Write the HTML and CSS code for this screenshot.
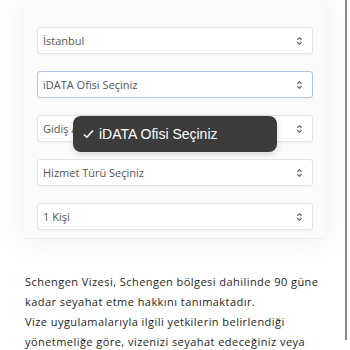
FILE: index.html
```html
<!DOCTYPE html>
<html lang="tr">
<head>
  <meta charset="UTF-8">
  <meta name="viewport" content="width=device-width, initial-scale=1">
  <title>Randevu</title>
  <link rel="stylesheet" href="styles.css">
</head>
<body>
  <div class="page">
    <div class="main">
      <div class="panel">
        <div class="field">
          <span>İstanbul</span>
          <svg class="arrows" viewBox="0 0 8 12" width="7" height="10"><path d="M1.5 4.5 L4 2 L6.5 4.5 M1.5 7.5 L4 10 L6.5 7.5" fill="none" stroke="#555" stroke-width="1.3"/></svg>
        </div>
        <div class="field focused">
          <span>iDATA Ofisi Seçiniz</span>
          <svg class="arrows" viewBox="0 0 8 12" width="7" height="10"><path d="M1.5 4.5 L4 2 L6.5 4.5 M1.5 7.5 L4 10 L6.5 7.5" fill="none" stroke="#555" stroke-width="1.3"/></svg>
        </div>
        <div class="field">
          <span>Gidiş Amacı Seçiniz</span>
          <svg class="arrows" viewBox="0 0 8 12" width="7" height="10"><path d="M1.5 4.5 L4 2 L6.5 4.5 M1.5 7.5 L4 10 L6.5 7.5" fill="none" stroke="#555" stroke-width="1.3"/></svg>
          <div class="popup">
            <svg class="check" viewBox="0 0 12 10" width="11" height="10"><path d="M1 5.5 L4.2 8.6 L11 1.2" fill="none" stroke="#fff" stroke-width="1.6"/></svg>
            <span>iDATA Ofisi Seçiniz</span>
          </div>
        </div>
        <div class="field">
          <span>Hizmet Türü Seçiniz</span>
          <svg class="arrows" viewBox="0 0 8 12" width="7" height="10"><path d="M1.5 4.5 L4 2 L6.5 4.5 M1.5 7.5 L4 10 L6.5 7.5" fill="none" stroke="#555" stroke-width="1.3"/></svg>
        </div>
        <div class="field">
          <span>1 Kişi</span>
          <svg class="arrows" viewBox="0 0 8 12" width="7" height="10"><path d="M1.5 4.5 L4 2 L6.5 4.5 M1.5 7.5 L4 10 L6.5 7.5" fill="none" stroke="#555" stroke-width="1.3"/></svg>
        </div>
      </div>
      <p class="info">
        Schengen Vizesi, Schengen bölgesi dahilinde 90 güne kadar seyahat etme hakkını tanımaktadır.<br>
        Vize uygulamalarıyla ilgili yetkilerin belirlendiği yönetmeliğe göre, vizenizi seyahat edeceğiniz veya
      </p>
    </div>
    <div class="scrollbar"></div>
  </div>
</body>
</html>
```

FILE: styles.css
```css
* {
  box-sizing: border-box;
  margin: 0;
  padding: 0;
}
body {
  font-family: 'Open Sans', 'Liberation Sans', sans-serif;
  background: #ffffff;
  color: #333;
  width: 350px;
  height: 350px;
  overflow: hidden;
}
.page {
  display: flex;
}
.main {
  width: 345px;
  padding: 0 20px 0 24px;
}
.scrollbar {
  width: 2px;
  height: 340px;
  background: #8a8a8a;
}
.panel {
  padding: 27px 12px 8px 13px;
  display: flex;
  flex-direction: column;
  gap: 17px;
  background: #fbfbfb;
  box-shadow: 0 0 30px rgba(0,0,0,0.07);
  border-bottom: 1px solid #efefef;
}
.field {
  position: relative;
  height: 27px;
  display: flex;
  align-items: center;
  justify-content: space-between;
  padding: 0 9px 0 5px;
  background: #fff;
  border: 1px solid #e4e4e4;
  border-radius: 3px;
  box-shadow: 0 1px 2px rgba(0,0,0,0.04);
  font-size: 11px;
  color: #555;
}
.field.focused {
  border-color: #a9c6e4;
}
.arrows {
  flex: none;
}
.popup {
  position: absolute;
  left: 35px;
  top: 0;
  width: 204px;
  height: 36px;
  background: #3c3c3c;
  border-radius: 8px;
  color: #fff;
  font-family: 'Liberation Sans', Arial, sans-serif;
  font-size: 14px;
  display: flex;
  align-items: center;
  padding-left: 10px;
  gap: 5px;
  box-shadow: 0 2px 6px rgba(0,0,0,0.15);
}
.check {
  flex: none;
}
.info {
  margin-top: 33px;
  margin-left: 1px;
  font-size: 11px;
  line-height: 20px;
  letter-spacing: 0.45px;
  color: #1e1e1e;
}
```
